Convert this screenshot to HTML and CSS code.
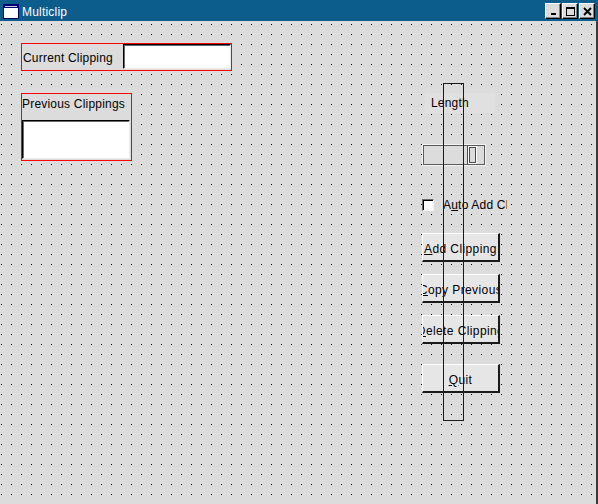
FILE: index.html
```html
<!DOCTYPE html>
<html>
<head>
<meta charset="utf-8">
<link rel="stylesheet" href="styles.css">
</head>
<body>
<div class="window">
  <div class="titlebar">
    <svg class="app-icon" width="16" height="15" viewBox="0 0 16 15">
      <rect x="0.5" y="0.5" width="15" height="14" fill="#ffffff" stroke="#00006e"/>
      <rect x="1" y="1" width="14" height="3" fill="#00006e"/>
      <rect x="2" y="2" width="12" height="1" fill="#c8c8e8"/>
    </svg>
    <span class="title">Multiclip</span>
    <div class="wm-buttons">
      <div class="wm-btn">
        <svg width="12" height="12" viewBox="0 0 12 12"><rect x="4" y="8" width="5" height="2" fill="#000"/></svg>
      </div>
      <div class="wm-btn">
        <svg width="12" height="12" viewBox="0 0 12 12"><rect x="2.5" y="2.5" width="8" height="8" fill="none" stroke="#000"/><rect x="2" y="2" width="9" height="2" fill="#000"/></svg>
      </div>
      <div class="wm-btn">
        <svg width="12" height="12" viewBox="0 0 12 12"><path d="M3 3 L10 10 M10 3 L3 10" stroke="#000" stroke-width="1.8"/></svg>
      </div>
    </div>
  </div>
  <div class="content">
    <div class="left">
      <div class="group current">
        <span class="group-label">Current Clipping</span>
        <div class="entry"></div>
      </div>
      <div class="group previous">
        <span class="group-label">Previous Clippings</span>
        <div class="entry big"></div>
      </div>
    </div>
    <div class="right">
      <div class="length">Length</div>
      <div class="scale"><div class="thumb"></div></div>
      <div class="check">
        <span class="box"></span>
        <span class="check-label">A<u>u</u>to Add Clippings</span>
      </div>
      <div class="btn first"><span><u>A</u>dd Clipping</span></div>
      <div class="btn"><span><u>C</u>opy Previous</span></div>
      <div class="btn"><span><u>D</u>elete Clipping</span></div>
      <div class="btn quit"><span><u>Q</u>uit</span></div>
    </div>
    <div class="frame-overlay"></div>
  </div>
</div>
</body>
</html>
```
FILE: styles.css
```css
html, body {
  margin: 0;
  padding: 0;
}
body {
  font-family: "Liberation Sans", Arial, sans-serif;
  font-size: 12px;
  letter-spacing: 0.2px;
  color: #000;
  background: #dcdcdc;
}
.window {
  width: 598px;
  height: 504px;
  display: flex;
  flex-direction: column;
}
.titlebar {
  height: 21px;
  background: #0c5c8c;
  display: flex;
  align-items: flex-start;
  color: #fff;
}
.app-icon {
  margin: 4px 0 0 3px;
  display: block;
}
.title {
  margin-left: 3px;
  padding-top: 3px;
  line-height: 18px;
}
.wm-buttons {
  margin-left: auto;
  margin-right: 3px;
  margin-top: 3px;
  display: flex;
  gap: 1px;
}
.wm-btn {
  width: 16px;
  height: 16px;
  box-sizing: border-box;
  background: #dcdcdc;
  border-top: 1px solid #ffffff;
  border-left: 1px solid #ffffff;
  border-right: 1px solid #000;
  border-bottom: 1px solid #000;
  box-shadow: inset -1px -1px 0 #808080;
  display: flex;
  align-items: center;
  justify-content: center;
}
.wm-btn svg {
  display: block;
}
.content {
  position: relative;
  flex: 1;
  display: flex;
  box-sizing: border-box;
  border-right: 2px solid #3a3a3a;
  background-color: #dcdcdc;
  background-image: conic-gradient(from 0deg at 1px 1px, transparent 270deg, #000 270deg);
  background-size: 10px 10px;
  background-position: 1px 3px;
}
.left {
  width: 401px;
  padding: 22px 0 0 21px;
  display: flex;
  flex-direction: column;
  align-items: flex-start;
  gap: 22px;
}
.group {
  border: 1px solid #ff0000;
  box-sizing: border-box;
  background: #dcdcdc;
}
.current {
  width: 211px;
  height: 28px;
  display: flex;
  align-items: flex-start;
}
.current .group-label {
  width: 101px;
  box-sizing: border-box;
  padding: 2px 0 0 1px;
  line-height: 24px;
  white-space: nowrap;
}
.entry {
  width: 108px;
  height: 25px;
  box-sizing: border-box;
  background: #ffffff;
  border: 1px solid;
  border-color: #000 #ececec #ececec #000;
  box-shadow: inset 1px 1px 0 #6a6a6a;
}
.previous {
  width: 111px;
  height: 68px;
  display: flex;
  flex-direction: column;
}
.previous .group-label {
  height: 26px;
  line-height: 21px;
  white-space: nowrap;
}
.entry.big {
  height: 39px;
}
.right {
  width: 100px;
  padding-top: 72px;
  display: flex;
  flex-direction: column;
  align-items: flex-start;
}
.length {
  margin-left: 3px;
  width: 70px;
  height: 20px;
  box-sizing: border-box;
  padding-left: 6px;
  line-height: 20px;
  background: #e0e0e0;
}
.scale {
  margin-top: 31px;
  width: 64px;
  height: 22px;
  box-sizing: border-box;
  background: #dcdcdc;
  border: 1px solid #f4f4f4;
  box-shadow: inset 0 0 0 1px #5a5a5a;
  display: flex;
  justify-content: flex-end;
  align-items: center;
  padding-right: 8px;
}
.thumb {
  width: 9px;
  height: 18px;
  box-sizing: border-box;
  border: 1px solid #ffffff;
  box-shadow: inset 0 0 0 1px #4a4a4a, -1px 0 0 #4a4a4a;
  background: #dcdcdc;
}
.check {
  margin-top: 32px;
  height: 14px;
  width: 85px;
  display: flex;
  align-items: center;
  background: #dcdcdc;
  overflow: hidden;
}
.box {
  flex: none;
  width: 12px;
  height: 12px;
  box-sizing: border-box;
  background: #ffffff;
  border: 1px solid;
  border-color: #6a6a6a #f4f4f4 #f4f4f4 #6a6a6a;
  box-shadow: inset 1px 1px 0 #000;
}
.check-label {
  margin-left: 9px;
  line-height: 14px;
  white-space: nowrap;
}
.btn {
  margin-top: 12px;
  width: 78px;
  height: 29px;
  box-sizing: border-box;
  background: #e6e6e6;
  border-top: 1px solid #ffffff;
  border-left: 1px solid #ffffff;
  border-right: 2px solid #1a1a1a;
  border-bottom: 2px solid #1a1a1a;
  padding-top: 4px;
  line-height: 22px;
  letter-spacing: 0.4px;
  display: flex;
  justify-content: center;
  overflow: hidden;
  white-space: nowrap;
}
.btn span {
  flex: none;
}
.btn.first {
  margin-top: 21px;
}
.btn.quit {
  margin-top: 20px;
}
.frame-overlay {
  position: absolute;
  left: 443px;
  top: 62px;
  width: 21px;
  height: 338px;
  box-sizing: border-box;
  border: 1px solid #1a1a1a;
}
```
